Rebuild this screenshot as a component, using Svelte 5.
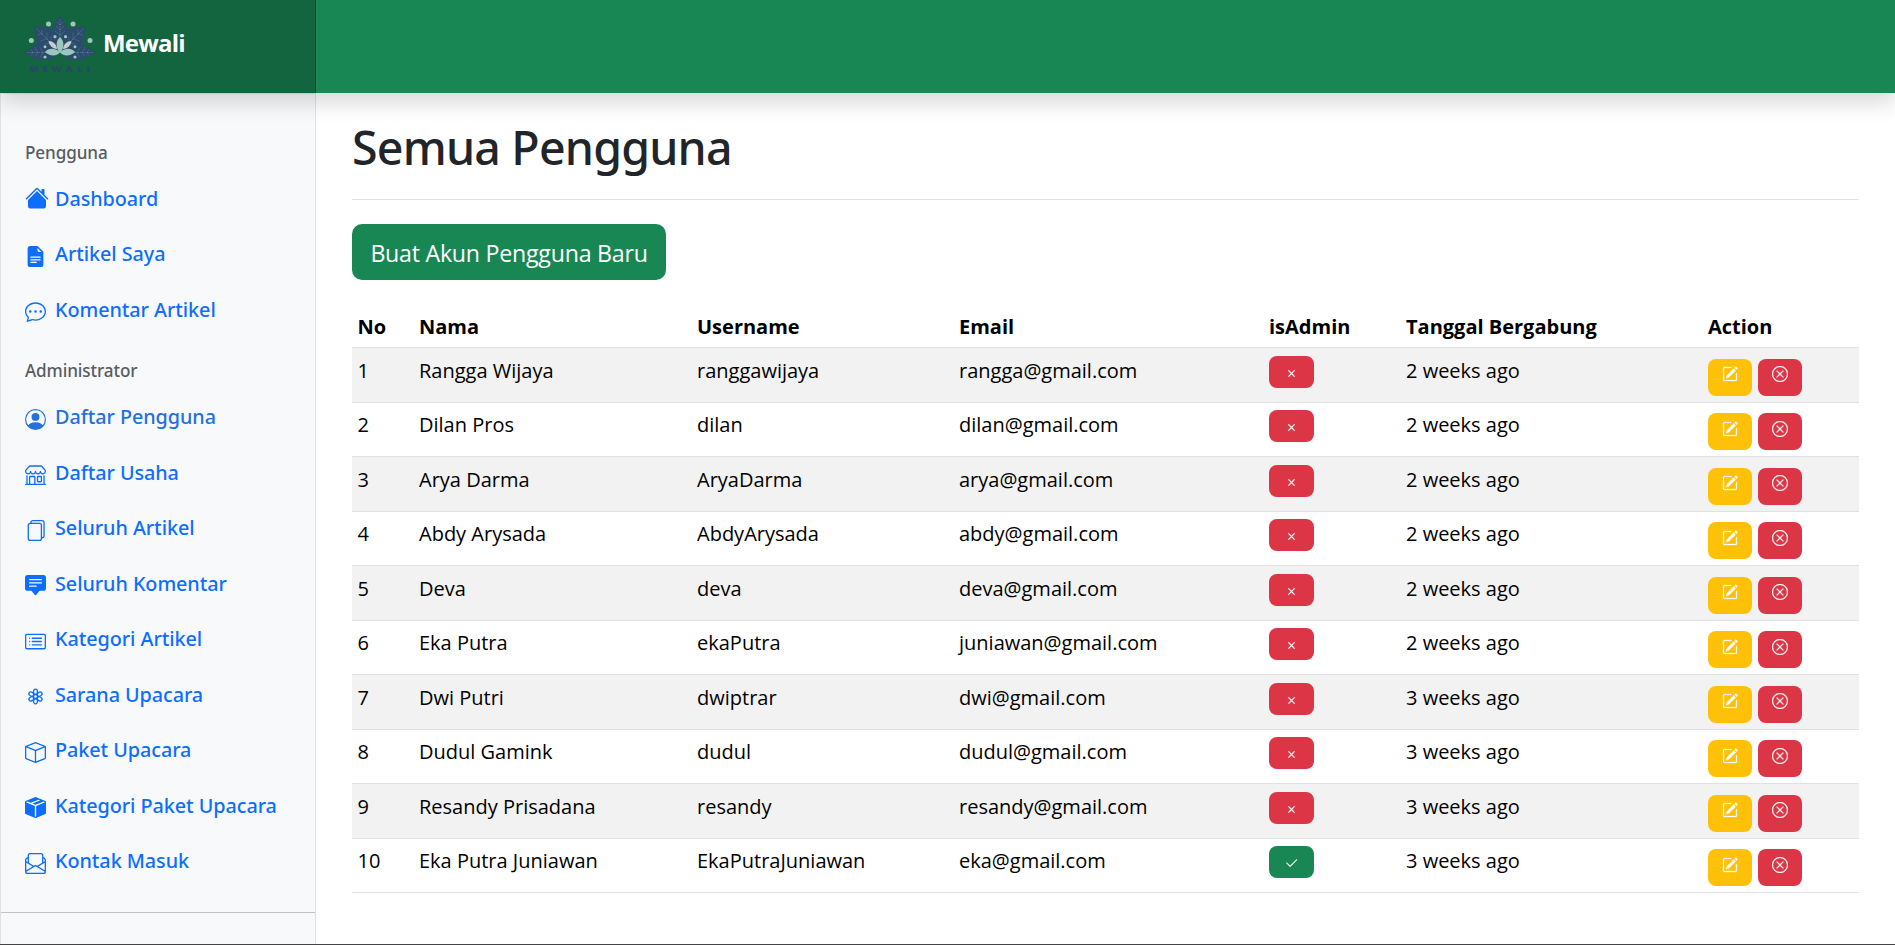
<script>
  const X = 'M4.646 4.646a.5.5 0 0 1 .708 0L8 7.293l2.646-2.647a.5.5 0 0 1 .708.708L8.707 8l2.647 2.646a.5.5 0 0 1-.708.708L8 8.707l-2.646 2.647a.5.5 0 0 1-.708-.708L7.293 8 4.646 5.354a.5.5 0 0 1 0-.708z';
  const CHECK = 'M13.854 3.646a.5.5 0 0 1 0 .708l-7 7a.5.5 0 0 1-.708 0l-3.5-3.5a.5.5 0 1 1 .708-.708L6.5 10.293l6.646-6.647a.5.5 0 0 1 .708 0z';
  const PENCIL = 'M15.502 1.94a.5.5 0 0 1 0 .706L14.459 3.69l-2-2L13.502.646a.5.5 0 0 1 .707 0l1.293 1.293zm-1.75 2.456-2-2L4.939 9.21a.5.5 0 0 0-.121.196l-.805 2.414a.25.25 0 0 0 .316.316l2.414-.805a.5.5 0 0 0 .196-.12l6.813-6.814zM1 13.5A1.5 1.5 0 0 0 2.5 15h11a1.5 1.5 0 0 0 1.5-1.5v-6a.5.5 0 0 0-1 0v6a.5.5 0 0 1-.5.5h-11a.5.5 0 0 1-.5-.5v-11a.5.5 0 0 1 .5-.5H9a.5.5 0 0 0 0-1H2.5A1.5 1.5 0 0 0 1 2.5v11z';
  const RING = 'M8 15A7 7 0 1 1 8 1a7 7 0 0 1 0 14zm0 1A8 8 0 1 0 8 0a8 8 0 0 0 0 16z';

  const groups = [
    {
      title: 'Pengguna',
      links: [
        { label: 'Dashboard', icon: 'm8 3.293 6 6V13.5a1.5 1.5 0 0 1-1.5 1.5h-9A1.5 1.5 0 0 1 2 13.5V9.293l6-6zm5-.793V6l-2-2V2.5a.5.5 0 0 1 .5-.5h1a.5.5 0 0 1 .5.5zM7.293 1.5a1 1 0 0 1 1.414 0l6.647 6.646a.5.5 0 0 1-.708.708L8 2.207 1.354 8.854a.5.5 0 1 1-.708-.708L7.293 1.5z', home: true },
        { label: 'Artikel Saya', icon: 'M9.293 0H4a2 2 0 0 0-2 2v12a2 2 0 0 0 2 2h8a2 2 0 0 0 2-2V4.707A1 1 0 0 0 13.707 4L10 .293A1 1 0 0 0 9.293 0zM9.5 3.5v-2l3 3h-2a1 1 0 0 1-1-1zM4.5 9a.5.5 0 0 1 0-1h7a.5.5 0 0 1 0 1h-7zM4 10.5a.5.5 0 0 1 .5-.5h7a.5.5 0 0 1 0 1h-7a.5.5 0 0 1-.5-.5zm.5 2.5a.5.5 0 0 1 0-1h4a.5.5 0 0 1 0 1h-4z' },
        { label: 'Komentar Artikel', icon: 'M5 8a1 1 0 1 1-2 0 1 1 0 0 1 2 0zm4 0a1 1 0 1 1-2 0 1 1 0 0 1 2 0zm3 1a1 1 0 1 0 0-2 1 1 0 0 0 0 2zM2.165 15.803l.02-.004c1.83-.363 2.948-.842 3.468-1.105A9.06 9.06 0 0 0 8 15c4.418 0 8-3.134 8-7s-3.582-7-8-7-8 3.134-8 7c0 1.76.743 3.37 1.97 4.6a10.437 10.437 0 0 1-.524 2.318l-.003.011a10.722 10.722 0 0 1-.244.637c-.079.186.074.394.273.362a21.673 21.673 0 0 0 .693-.125zm.8-3.108a1 1 0 0 0-.287-.801C1.618 10.83 1 9.468 1 8c0-3.192 3.004-6 7-6s7 2.808 7 6c0 3.193-3.004 6-7 6a8.06 8.06 0 0 1-2.088-.272 1 1 0 0 0-.711.074c-.387.196-1.24.57-2.634.893a10.97 10.97 0 0 0 .398-2z' }
      ]
    },
    {
      title: 'Administrator',
      links: [
        { label: 'Daftar Pengguna', active: true, icon: 'M11 6a3 3 0 1 1-6 0 3 3 0 0 1 6 0zM0 8a8 8 0 1 1 16 0A8 8 0 0 1 0 8zm8-7a7 7 0 0 0-5.468 11.37C3.242 11.226 4.805 10 8 10s4.757 1.225 5.468 2.37A7 7 0 0 0 8 1z' },
        { label: 'Daftar Usaha', icon: 'M2.97 1.35A1 1 0 0 1 3.73 1h8.54a1 1 0 0 1 .76.35l2.609 3.044A1.5 1.5 0 0 1 16 5.37v.255a2.375 2.375 0 0 1-4.25 1.458A2.371 2.371 0 0 1 9.875 8 2.37 2.37 0 0 1 8 7.083 2.37 2.37 0 0 1 6.125 8a2.37 2.37 0 0 1-1.875-.917A2.375 2.375 0 0 1 0 5.625V5.37a1.5 1.5 0 0 1 .361-.976l2.61-3.045zm1.78 4.275a1.375 1.375 0 0 0 2.75 0 .5.5 0 0 1 1 0 1.375 1.375 0 0 0 2.75 0 .5.5 0 0 1 1 0 1.375 1.375 0 1 0 2.75 0V5.37a.5.5 0 0 0-.12-.325L12.27 2H3.73L1.12 5.045A.5.5 0 0 0 1 5.37v.255a1.375 1.375 0 0 0 2.75 0 .5.5 0 0 1 1 0zM1.5 8.5A.5.5 0 0 1 2 9v6h1v-5a1 1 0 0 1 1-1h3a1 1 0 0 1 1 1v5h6V9a.5.5 0 0 1 1 0v6h.5a.5.5 0 0 1 0 1H.5a.5.5 0 0 1 0-1H1V9a.5.5 0 0 1 .5-.5zM4 15h3v-5H4v5zm5-5a1 1 0 0 1 1-1h2a1 1 0 0 1 1 1v3a1 1 0 0 1-1 1h-2a1 1 0 0 1-1-1v-3zm3 0h-2v3h2v-3z' },
        { label: 'Seluruh Artikel', icon: 'M13 0H6a2 2 0 0 0-2 2 2 2 0 0 0-2 2v10a2 2 0 0 0 2 2h7a2 2 0 0 0 2-2 2 2 0 0 0 2-2V2a2 2 0 0 0-2-2zm0 13V4a2 2 0 0 0-2-2H5a1 1 0 0 1 1-1h7a1 1 0 0 1 1 1v10a1 1 0 0 1-1 1zM3 4a1 1 0 0 1 1-1h7a1 1 0 0 1 1 1v10a1 1 0 0 1-1 1H4a1 1 0 0 1-1-1V4z' },
        { label: 'Seluruh Komentar', icon: 'M0 2a2 2 0 0 1 2-2h12a2 2 0 0 1 2 2v8a2 2 0 0 1-2 2h-2.5a1 1 0 0 0-.8.4l-1.9 2.533a1 1 0 0 1-1.6 0L5.3 12.4a1 1 0 0 0-.8-.4H2a2 2 0 0 1-2-2V2zm3.5 1a.5.5 0 0 0 0 1h9a.5.5 0 0 0 0-1h-9zm0 2.5a.5.5 0 0 0 0 1h9a.5.5 0 0 0 0-1h-9zm0 2.5a.5.5 0 0 0 0 1h5a.5.5 0 0 0 0-1h-5z' },
        { label: 'Kategori Artikel', icon: 'M14.5 3a.5.5 0 0 1 .5.5v9a.5.5 0 0 1-.5.5h-13a.5.5 0 0 1-.5-.5v-9a.5.5 0 0 1 .5-.5h13zm-13-1A1.5 1.5 0 0 0 0 3.5v9A1.5 1.5 0 0 0 1.5 14h13a1.5 1.5 0 0 0 1.5-1.5v-9A1.5 1.5 0 0 0 14.5 2h-13zM5 8a.5.5 0 0 1 .5-.5h7a.5.5 0 0 1 0 1h-7A.5.5 0 0 1 5 8zm0-2.5a.5.5 0 0 1 .5-.5h7a.5.5 0 0 1 0 1h-7a.5.5 0 0 1-.5-.5zm0 5a.5.5 0 0 1 .5-.5h7a.5.5 0 0 1 0 1h-7a.5.5 0 0 1-.5-.5zm-1-5a.5.5 0 1 1-1 0 .5.5 0 0 1 1 0zM4 8a.5.5 0 1 1-1 0 .5.5 0 0 1 1 0zm0 2.5a.5.5 0 1 1-1 0 .5.5 0 0 1 1 0z' },
        { label: 'Sarana Upacara', flower: true },
        { label: 'Paket Upacara', icon: 'M8.186 1.113a.5.5 0 0 0-.372 0L1.846 3.5 8 5.961 14.154 3.5 8.186 1.113zM15 4.239l-6.5 2.6v7.922l6.5-2.6V4.24zM7.5 14.762V6.838L1 4.239v7.923l6.5 2.6zM7.443.184a1.5 1.5 0 0 1 1.114 0l7.129 2.852A.5.5 0 0 1 16 3.5v8.662a1 1 0 0 1-.629.928l-7.185 2.874a.5.5 0 0 1-.372 0L.63 13.09a1 1 0 0 1-.63-.928V3.5a.5.5 0 0 1 .314-.464L7.443.184z' },
        { label: 'Kategori Paket Upacara', icon: 'M15.528 2.973a.75.75 0 0 1 .472.696v8.662a.75.75 0 0 1-.472.696l-7.25 2.9a.75.75 0 0 1-.557 0l-7.25-2.9A.75.75 0 0 1 0 12.331V3.669a.75.75 0 0 1 .471-.696L7.443.184l.01-.003.268-.108a.75.75 0 0 1 .558 0l.269.108.01.003 6.97 2.789ZM10.404 2 4.25 4.461 1.846 3.5 1 3.839v.4l6.5 2.6v7.922l.5.2.5-.2V6.84l6.5-2.6v-.4l-.846-.339L8 5.961 5.596 5l6.154-2.461L10.404 2Z' },
        { label: 'Kontak Masuk', icon: 'M4 0a2 2 0 0 0-2 2v1.133l-.941.502A2 2 0 0 0 0 5.4V14a2 2 0 0 0 2 2h12a2 2 0 0 0 2-2V5.4a2 2 0 0 0-1.059-1.765L14 3.133V2a2 2 0 0 0-2-2H4Zm10 4.267.47.25A1 1 0 0 1 15 5.4v.817l-1 .6v-2.55Zm-1 3.15-3.75 2.25L8 8.917l-1.25.75L3 7.417V2a1 1 0 0 1 1-1h8a1 1 0 0 1 1 1v5.417Zm-11-.6-1-.6V5.4a1 1 0 0 1 .53-.882L2 4.267v2.55Zm13 .566v5.734l-4.778-2.867L15 7.383Zm-.035 6.88A1 1 0 0 1 14 15H2a1 1 0 0 1-.965-.738L8 10.083l6.965 4.18ZM1 13.116V7.383l4.778 2.867L1 13.117Z' }
      ]
    }
  ];

  const users = [
    ['Rangga Wijaya', 'ranggawijaya', 'rangga@gmail.com', false, '2 weeks ago'],
    ['Dilan Pros', 'dilan', 'dilan@gmail.com', false, '2 weeks ago'],
    ['Arya Darma', 'AryaDarma', 'arya@gmail.com', false, '2 weeks ago'],
    ['Abdy Arysada', 'AbdyArysada', 'abdy@gmail.com', false, '2 weeks ago'],
    ['Deva', 'deva', 'deva@gmail.com', false, '2 weeks ago'],
    ['Eka Putra', 'ekaPutra', 'juniawan@gmail.com', false, '2 weeks ago'],
    ['Dwi Putri', 'dwiptrar', 'dwi@gmail.com', false, '3 weeks ago'],
    ['Dudul Gamink', 'dudul', 'dudul@gmail.com', false, '3 weeks ago'],
    ['Resandy Prisadana', 'resandy', 'resandy@gmail.com', false, '3 weeks ago'],
    ['Eka Putra Juniawan', 'EkaPutraJuniawan', 'eka@gmail.com', true, '3 weeks ago']
  ];
</script>

{#snippet glyph(d, cls)}
  <svg class={cls} viewBox="0 0 16 16" fill="currentColor" aria-hidden="true"><path {d} /></svg>
{/snippet}

<div class="page">
  <header>
    <div class="brand">
      <svg class="logo" viewBox="24 14 74 60" aria-hidden="true">
        <g fill="#2b4c6d">
          <path d="M60 15.5C62 20 68 25 68 33C68 42 64 47 60 51C56 47 52 42 52 33C52 25 58 20 60 15.5Z" />
          <path d="M34 26C39 28 49 25 54 31C60 38 60 47 60 52C50 52 41 49 37 42C34 37 36 30 34 26Z" />
          <path d="M86 26C81 28 71 25 66 31C60 38 60 47 60 52C70 52 79 49 83 42C86 37 84 30 86 26Z" />
          <path d="M24 52.5C30 50 34 42.500 43 43.500C51 44 57 49 60 52.5C56 57 50 60 43 60C34 60 30 55 24 52.5Z" />
          <path d="M96 52.5C90 50 86 42.500 77 43.500C69 44 63 49 60 52.5C64 57 70 60 77 60C86 60 90 55 96 52.5Z" />
        </g>
        <g stroke="#718da0" stroke-width=".5" fill="none" stroke-dasharray="1.5 .8">
          <path d="M60 19V38M60 30l-4-4M60 30l4-4M60 35l-5-4M60 35l5-4M60 25l-3-3M60 25l3-3" />
          <path d="M37 29L53 45M42 34v-5M42 34l-5 1M47 39v-7M47 39l-7 2M51 43v-6M51 43l-6 1" />
          <path d="M83 29L67 45M78 34v-5M78 34l5 1M73 39v-7M73 39l7 2M69 43v-6M69 43l6 1" />
          <path d="M27 52.5H46M33 52.5l-2-3M33 52.5l-2 3M38 52.5l-3-5M38 52.5l-3 4M43 52.5l-3-5M43 52.5l-3 5" />
          <path d="M93 52.5H74M87 52.5l2-3M87 52.5l2 3M82 52.5l3-5M82 52.5l3 4M77 52.5l3-5M77 52.5l3 5" />
        </g>
        <g fill="#9bc7bd">
          <circle cx="48.5" cy="24" r="2.5" /><circle cx="73" cy="24" r="2.5" />
          <circle cx="31.3" cy="40.6" r="2.5" /><circle cx="90" cy="40.6" r="2.5" />
          <circle cx="55" cy="36.7" r="1.6" /><circle cx="65.5" cy="36.7" r="1.6" />
          <circle cx="45" cy="46.7" r="1.5" /><circle cx="75" cy="46.7" r="1.5" />
          <circle cx="45" cy="57" r="1.6" /><circle cx="75" cy="57" r="1.6" />
          <path d="M60 37C64.500 41 64.500 48 60 53C55.500 48 55.500 41 60 37Z" />
          <path d="M45 52C49 47.500 56 48 60 52.500C56 57 49 56 45 52Z" />
          <path d="M75 52C71 47.500 64 48 60 52.500C64 57 71 56 75 52Z" />
        </g>
        <g fill="#c8cdcb">
          <path d="M48.500 41C53 41 56.500 44 57 49C52.500 49 49 45 48.500 41Z" />
          <path d="M71.500 41C67 41 63.500 44 63 49C67.500 49 71 45 71.500 41Z" />
        </g>
        <text x="29" y="72" textLength="61" fill="#28476a" font-size="9.500" font-weight="800">MEWALI</text>
      </svg>
      <span class="name">Mewali</span>
    </div>
  </header>

  <div class="body">
    <nav>
      {#each groups as group}
        <h6>{group.title}</h6>
        <ul>
          {#each group.links as link}
            <li class:active={link.active}>
              {#if link.flower}
                <svg class="icon" viewBox="0 0 16 16" fill="none" stroke="currentColor" stroke-width=".95" aria-hidden="true">
                  {#each [0, 60, 120, 180, 240, 300] as a}
                    <ellipse cx="8" cy="4.300" rx="1.500" ry="1.900" transform={`rotate(${a} 8 8)`} />
                  {/each}
                  <circle cx="8" cy="8" r="1.500" />
                </svg>
              {:else}
                {@render glyph(link.icon, link.home ? 'icon home' : 'icon')}
              {/if}
              <span>{link.label}</span>
            </li>
          {/each}
        </ul>
      {/each}
      <hr />
    </nav>

    <main>
      <div class="title"><h1>Semua Pengguna</h1></div>
      <button class="create">Buat Akun Pengguna Baru</button>
      <table>
        <colgroup>
          <col class="c-no" /><col class="c-name" /><col class="c-user" /><col class="c-mail" />
          <col class="c-admin" /><col class="c-date" /><col />
        </colgroup>
        <thead>
          <tr>
            <th>No</th><th>Nama</th><th>Username</th><th>Email</th><th>isAdmin</th><th>Tanggal Bergabung</th><th>Action</th>
          </tr>
        </thead>
        <tbody>
          {#each users as [name, username, email, admin, joined], i}
            <tr>
              <td>{i + 1}</td>
              <td>{name}</td>
              <td>{username}</td>
              <td>{email}</td>
              <td><span class="flag" class:yes={admin}>{@render glyph(admin ? CHECK : X, 'mini')}</span></td>
              <td>{joined}</td>
              <td>
                <div class="actions">
                  <span class="act edit">{@render glyph(PENCIL, 'mini')}</span>
                  <span class="act del">{@render glyph(RING + X, 'mini')}</span>
                </div>
              </td>
            </tr>
          {/each}
        </tbody>
      </table>
    </main>
  </div>
</div>

<style>
  :global(body) { background: #fff; overflow: hidden; }
  .page {
    box-sizing: border-box;
    height: 945px;
    display: flex;
    flex-direction: column;
    overflow: hidden;
    border-bottom: 1px solid #444447;
    font-family: 'Open Sans', 'Noto Sans', sans-serif;
    font-size: 20px;
    color: #212529;
  }
  header {
    flex: none;
    height: 93px;
    display: flex;
    background: #198754;
    box-shadow: 0 10px 20px rgba(0, 0, 0, .15);
    position: relative;
    z-index: 1;
  }
  .brand {
    box-sizing: border-box;
    width: 316px;
    padding-left: 24px;
    display: flex;
    gap: 5px;
    background: rgba(0, 0, 0, .25);
    box-shadow: inset -1px 0 0 rgba(0, 0, 0, .25);
  }
  .logo { width: 74px; height: 60px; margin-top: 14px; }
  .name { margin-top: 25px; line-height: 36px; font-size: 24px; font-weight: 700; color: #fff; letter-spacing: -.8px; }
  .body { flex: 1; display: flex; min-height: 0; }
  nav {
    box-sizing: border-box;
    flex: none;
    width: 316px;
    padding-top: 44px;
    background: #f8f9fa;
    border: 1px solid #dee2e6;
    border-bottom: 0;
    font-family: 'Noto Sans', 'Open Sans', sans-serif;
  }
  h6 { margin: 0; padding-left: 24px; font-size: 17.100px; line-height: 30px; font-weight: 500; color: #585c60; letter-spacing: -.1px; }
  ul { list-style: none; margin: 3px 0 18px; padding: 0; }
  ul:last-of-type { margin-top: 4px; }
  li { display: flex; align-items: center; gap: 9px; height: 55.500px; padding-left: 24px; color: #0d6efd; font-size: 19.800px; font-weight: 500; white-space: nowrap; }
  li span { line-height: 30px; letter-spacing: -.05px; }
  li.active { color: #2470dc; }
  .icon { width: 21px; height: 21px; flex: none; margin-top: 4px; }
  .home { width: 24px; height: 24px; margin: -2px -3px 0 0; }
  nav hr { margin: 23px 0 0; border: 0; border-top: 1px solid #c0c2c4; }
  main { flex: 1; padding: 0 36px; min-width: 0; }
  .title { height: 106px; border-bottom: 1px solid #dee2e6; margin-bottom: 24px; display: flex; }
  h1 { margin: 24px 0 0; font-family: 'Noto Sans', 'Open Sans', sans-serif; font-size: 46.500px; line-height: 60px; font-weight: 500; letter-spacing: -.8px; }
  .create {
    display: block;
    width: 314px;
    height: 56px;
    padding: 2px 0 0;
    border: 0;
    border-radius: 10px;
    background: #198754;
    color: #fff;
    font-family: inherit;
    font-size: 23.200px;
    letter-spacing: -.25px;
    white-space: nowrap;
  }
  table { width: 1507px; margin-top: 26px; table-layout: fixed; border-collapse: separate; border-spacing: 0; color: #000; }
  .c-no { width: 61.500px; } .c-name { width: 278px; } .c-user { width: 262px; } .c-mail { width: 310px; } .c-admin { width: 137px; } .c-date { width: 302px; }
  th, td { box-sizing: border-box; padding: 0 5.500px; text-align: left; vertical-align: top; border-bottom: 1px solid #dee2e6; white-space: nowrap; }
  th { height: 42px; padding-top: 6px; line-height: 30px; font-weight: 700; }
  td { height: 54.500px; padding-top: 7.750px; line-height: 30px; }
  tbody tr:nth-child(odd) td { background: #f2f2f2; }
  .flag { display: flex; align-items: center; justify-content: center; width: 45px; height: 32px; border-radius: 8px; background: #dc3545; color: #fff; }
  .yes { background: #198754; }
  .mini { width: 15px; height: 15px; display: block; stroke: currentColor; stroke-width: .25; }
  .flag .mini { margin-top: 3px; }
  .actions { display: flex; gap: 6px; padding-top: 3px; }
  .act { box-sizing: border-box; display: flex; justify-content: center; width: 44px; height: 37px; padding-top: 7.500px; border-radius: 8px; color: #fff; }
  .act .mini { width: 16px; height: 16px; }
  .edit { background: #ffc107; }
  .del { background: #dc3545; }
</style>
